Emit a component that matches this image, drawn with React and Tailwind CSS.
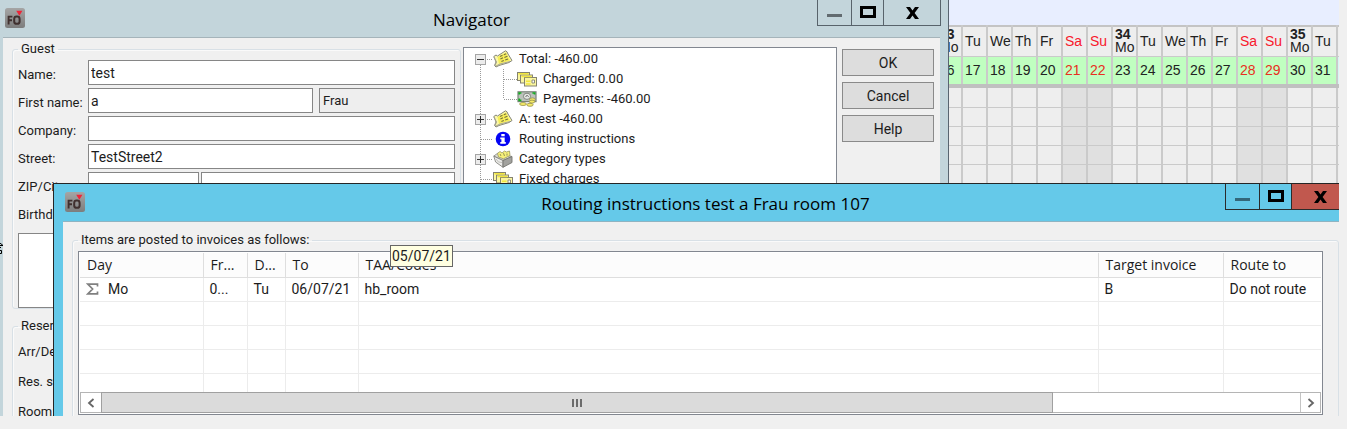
import React from "react";

const ui = "font-[Roboto,'Liberation_Sans',sans-serif] text-[13px] leading-[18px] text-[#1c1c1c]";

function AppIcon() {
  return (
    <svg width="20" height="20" viewBox="0 0 20 20" aria-hidden="true" className="shrink-0">
      <defs>
        <linearGradient id="badge" x1="0" y1="0" x2="0" y2="1">
          <stop offset="0" stopColor="#a5a5a5" />
          <stop offset="1" stopColor="#7d7d7d" />
        </linearGradient>
      </defs>
      <rect width="20" height="20" rx="2.5" fill="url(#badge)" />
      <path d="M3.6 16.5V8.6H7.4M3.6 12.3H7" fill="none" stroke="#40302f" strokeWidth="1.9" />
      <rect x="9.2" y="8.6" width="5.4" height="7.2" rx="2.4" fill="none" stroke="#40302f" strokeWidth="2" />
      <path d="M11.2 2.8H17.4L14.4 7.8Z" fill="#ee2438" />
    </svg>
  );
}

function Note() {
  return (
    <svg width="20" height="18" viewBox="0 0 20 18" aria-hidden="true">
      <path d="M0.8 6.5L3 5L4.5 6L12.5 0.8L14 1.8L15 4L19 10.5L16 12.5L6 15.5L3 17L1.5 15.5L3 12Z" fill="#fbf8a8" stroke="#85857a" strokeWidth="1" />
      <path d="M4.5 7L13 2.5L17 10.5L6 14Z" fill="#f6ee58" />
      <path d="M1 7L3.5 12L2 16M3 16L7 14L17 11.5" fill="none" stroke="#a8a690" strokeWidth="1" />
      <path d="M7 6.4L9.5 5.2M10.8 4.8L13.2 3.8M7.4 9L10 7.8M11.4 7.4L14.4 6.2M8.4 11.4L10.8 10.4M12.2 10L15 9" fill="none" stroke="#77713c" strokeWidth="1.1" />
    </svg>
  );
}

function Cards() {
  return (
    <svg width="20" height="15" viewBox="0 0 20 15" aria-hidden="true">
      <g fill="#faf6a0" stroke="#85836f" strokeWidth="1">
        <rect x="0.5" y="0.5" width="12" height="8" />
        <rect x="3.5" y="3" width="12" height="8" />
        <rect x="7.5" y="5.5" width="12" height="8.5" />
      </g>
      <path d="M1.5 1.8H11.5M4.5 4.4H14.5M9 9.2H13.5M9 12H13.5" stroke="#f2e63e" strokeWidth="1.5" />
      <path d="M15 8h2.5v3H15z" fill="#fff" stroke="#85836f" strokeWidth="0.9" />
    </svg>
  );
}

function Cash() {
  return (
    <svg width="20" height="16" viewBox="0 0 20 16" aria-hidden="true">
      <rect x="1" y="0.8" width="18" height="9.8" fill="#bcc2bb" stroke="#7b827a" strokeWidth="1.2" />
      <path d="M2.2 3.6V2H4.4M15.4 2H17.6V3.6M2.2 7.6V9.4H4.4" fill="none" stroke="#12ac20" strokeWidth="1.7" />
      <ellipse cx="10" cy="5.3" rx="3.6" ry="3.1" fill="#e4e7e3" stroke="#82877f" />
      <path d="M8.6 6L10 4.2L11.6 5.8" fill="none" stroke="#666" strokeWidth="1" />
      <g fill="#f6ec66" stroke="#96904c" strokeWidth="0.8">
        <ellipse cx="15.4" cy="8.4" rx="2.8" ry="1.5" />
        <ellipse cx="15" cy="10.6" rx="2.8" ry="1.5" />
        <ellipse cx="6" cy="13" rx="3.4" ry="1.5" />
        <ellipse cx="13" cy="13.8" rx="3.2" ry="1.5" />
      </g>
    </svg>
  );
}

function Info() {
  return (
    <svg width="20" height="16" viewBox="0 0 20 16" aria-hidden="true">
      <circle cx="10" cy="8" r="7.3" fill="#0404f4" />
      <path d="M8.3 3H11.7V5.3H8.3ZM7.3 6.5H11.7V11H12.8V12.8H7.3V11H8.4V8.2H7.3Z" fill="#fff" />
    </svg>
  );
}

function Box() {
  return (
    <svg width="20" height="18" viewBox="0 0 20 18" aria-hidden="true">
      <path d="M0.8 6L5 3L19 6.5L10 10.5Z" fill="#dcdcd6" stroke="#85857f" strokeWidth="0.8" />
      <path d="M5.5 7L4.5 3.5L7 1.5L9 3L11.5 1L13.5 2L16.5 1L17 5.5L10.5 8.8Z" fill="#f6f07a" stroke="#99965f" strokeWidth="0.8" />
      <path d="M7 4L8 6M10.5 3.2L11.5 6M14 3.5L14 5.6" stroke="#8b874e" strokeWidth="0.9" />
      <path d="M0.8 6.2L10 10.5V17.3L2.6 12Z" fill="#ececea" stroke="#85857f" strokeWidth="0.9" />
      <path d="M10 10.5L19 6.5V12.5L10 17.3Z" fill="#a2a29e" stroke="#75756f" strokeWidth="0.9" />
      <path d="M3 9L5.5 12L9 12.5" fill="none" stroke="#b5b5af" strokeWidth="0.8" />
    </svg>
  );
}

function WindowButtons({ line, dash, close }) {
  return (
    <div className={`-mr-px flex h-[26px] border border-t-0 ${line}`}>
      <button aria-label="Minimize" className={`flex w-[34px] items-center justify-center border-r pt-1.5 ${line}`}>
        <svg width="15" height="3" viewBox="0 0 15 3"><path d="M0 0H15V3H0Z" fill={dash} /></svg>
      </button>
      <button aria-label="Maximize" className={`flex w-8 items-center justify-center border-r pb-px ${line}`}>
        <svg width="16" height="12" viewBox="0 0 16 12"><path d="M1.5 1.5H14.5V10.5H1.5Z" fill="none" stroke="#000" strokeWidth="3" /></svg>
      </button>
      <button aria-label="Close" className={`flex w-[56px] items-center justify-center ${close}`}>
        <svg width="13" height="12" viewBox="0 0 13 12">
          <path d="M0 0H4L6.5 3.6L9 0H13L8.6 6L13 12H9L6.5 8.4L4 12H0L4.4 6Z" fill="#000" />
        </svg>
      </button>
    </div>
  );
}

const days = [
  ["Mo", 16, "33"], ["Tu", 17], ["We", 18], ["Th", 19], ["Fr", 20], ["Sa", 21], ["Su", 22],
  ["Mo", 23, "34"], ["Tu", 24], ["We", 25], ["Th", 26], ["Fr", 27], ["Sa", 28], ["Su", 29],
  ["Mo", 30, "35"], ["Tu", 31],
];
const weekend = (d) => d === "Sa" || d === "Su";

function Calendar() {
  return (
    <section aria-label="Room calendar" className="flex flex-col items-end bg-[#eeeeee]">
      <div className="h-[25px] w-full bg-[#e8eeff]" />
      <table className="table-fixed border-collapse border-t-2 border-[#c4c4c4] font-['Liberation_Sans',Arial,sans-serif] text-[14px] leading-[14px] text-[#222]">
        <thead>
          <tr className="h-[30px]">
            {days.map(([d, n, week]) => (
              <th key={n} className={`w-[25px] min-w-[25px] border-r-2 border-b border-[#cacaca] p-0 pl-[2px] text-left font-normal ${weekend(d) ? "text-[#f8182c]" : ""}`}>
                {week && <span className="block leading-[13px] font-bold">{week}</span>}
                <span className={week ? "block leading-[13px]" : ""}>{d}</span>
              </th>
            ))}
            <th className="w-[2px] min-w-[2px] border-b border-[#cacaca] p-0" />
          </tr>
          <tr className="h-[28px] bg-[#c0ffc0]">
            {days.map(([d, n]) => (
              <th key={n} className={`border-r-2 border-r-[#cacaca] p-0 pl-[2px] text-left font-normal ${weekend(d) ? "text-[#e83020]" : ""}`}>{n}</th>
            ))}
            <th className="bg-[#d8f4f4] p-0" />
          </tr>
          <tr className="h-1 bg-[#c0c0c0]">
            <th colSpan={17} className="p-0" />
          </tr>
        </thead>
        <tbody>
          {[0, 1, 2, 3, 4, 5].map((r) => (
            <tr key={r} className="h-[19px]">
              {days.map(([d, n]) => (
                <td key={n} className={`border-r-2 border-b border-[#cacaca] p-0 ${weekend(d) ? "bg-[#e0e0e0]" : ""}`} />
              ))}
              <td className="border-b border-[#cacaca] p-0" />
            </tr>
          ))}
        </tbody>
      </table>
    </section>
  );
}

const box = "h-[25px] min-w-0 border border-[#868686] bg-white px-[2px] text-[14px] outline-none";

function Field({ label, id, children }) {
  return (
    <div className="flex h-[25px]">
      <label htmlFor={id} className="w-[70px] shrink-0 pt-[6px] whitespace-nowrap">{label}</label>
      <div className="flex min-w-0 grow">{children}</div>
    </div>
  );
}

function Group({ title, className, children }) {
  return (
    <fieldset className={`min-w-0 rounded-[3px] border border-[#d8e0e6] shadow-[inset_1px_1px_0_#fafafa] ${className}`}>
      <legend className="px-[3px]">{title}</legend>
      {children}
    </fieldset>
  );
}

function Expander({ open }) {
  return (
    <button aria-label={open ? "Collapse" : "Expand"} className="relative flex size-[11px] items-center justify-center border border-[#a5a5a5] bg-[#ececec]">
      <svg width="7" height="7" viewBox="0 0 7 7">
        <path d={open ? "M0 3.5H7" : "M0 3.5H7M3.5 0V7"} stroke="#333" strokeWidth="1" />
      </svg>
    </button>
  );
}

const tree = [
  { text: "Total: -460.00", icon: <Note />, toggle: "open" },
  { text: "Charged: 0.00", icon: <Cards />, child: true },
  { text: "Payments: -460.00", icon: <Cash />, child: true, last: true },
  { text: "A: test -460.00", icon: <Note />, toggle: "closed" },
  { text: "Routing instructions", icon: <Info /> },
  { text: "Category types", icon: <Box />, toggle: "closed" },
  { text: "Fixed charges", icon: <Cards /> },
];

function Tree() {
  return (
    <ul className="min-w-0 grow border border-[#828790] bg-white pt-px pl-[9px]">
      {tree.map((n, i) => (
        <li key={n.text} className="flex h-5 items-center">
          <span className="flex h-5 w-5 items-center">
            <svg width="20" height="20" viewBox="0 0 20 20" className="absolute" aria-hidden="true">
              <path d={`M7.5 ${i === 0 ? 10 : 0}V20${n.child ? "" : "M8 10.5H20"}`} stroke="#9a9a9a" strokeDasharray="1 1" fill="none" />
            </svg>
            {n.toggle && <span className="relative flex pl-[2px]"><Expander open={n.toggle === "open"} /></span>}
          </span>
          {n.child && (
            <svg width="24" height="20" viewBox="0 0 24 20" aria-hidden="true">
              <path d={`M10.5 0V${n.last ? 10 : 20}M11 10.5H24`} stroke="#9a9a9a" strokeDasharray="1 1" fill="none" />
            </svg>
          )}
          <span className="flex w-5 justify-center">{n.icon}</span>
          <span className="pl-[6px] whitespace-nowrap">{n.text}</span>
        </li>
      ))}
    </ul>
  );
}

function Navigator() {
  return (
    <section aria-label="Navigator" className={`absolute top-0 right-[390px] bottom-0 left-0 flex flex-col border-r border-[#5a6570] bg-[#c3d5db] pr-2 pl-[3px] ${ui}`}>
      <header className="grid h-[37px] shrink-0 grid-cols-[1fr_auto_1fr]">
        <div className="pt-2 pl-[2px]"><AppIcon /></div>
        <h1 className="pt-2 font-['Open_Sans','Noto_Sans',sans-serif] text-[17px] leading-6 text-black">Navigator</h1>
        <div className="flex justify-end"><WindowButtons line="border-[#58636b]" dash="#626b70" close="" /></div>
      </header>
      <div className="flex min-h-0 grow border-t border-[#a5b4ba] bg-[#f0f0f0] pt-[2px] pr-[6px] pl-[9px]">
        <div className="flex w-[449px] shrink-0 flex-col gap-2">
          <Group title="Guest" className="h-[273px] pr-[5px] pl-[5px]">
            <div className="flex flex-col gap-[3px] pt-[2px]">
              <Field label="Name:" id="name"><input id="name" defaultValue="test" className={`grow ${box}`} /></Field>
              <Field label="First name:" id="first">
                <input id="first" defaultValue="a" className={`mr-[6px] grow ${box}`} />
                <input aria-label="Title" defaultValue="Frau" className="h-[25px] w-[136px] border border-[#868686] bg-[#eeeeee] px-[3px] outline-none" />
              </Field>
              <Field label="Company:" id="company"><input id="company" className={`grow ${box}`} /></Field>
              <Field label="Street:" id="street"><input id="street" defaultValue="TestStreet2" className={`grow ${box}`} /></Field>
              <Field label="ZIP/City:" id="zip">
                <input id="zip" className={`mr-[2px] w-[111px] ${box}`} />
                <input aria-label="City" className={`grow ${box}`} />
              </Field>
              <Field label="Birthdate:" id="birth"><input id="birth" className={`grow ${box}`} /></Field>
              <textarea aria-label="Notes" className="mt-[5px] h-[75px] resize-none border border-[#868686] bg-white" />
            </div>
          </Group>
          <Group title="Reservation" className="h-[160px] pl-[5px]">
            <div className="flex flex-col gap-[5px] pt-[2px]">
              <Field label="Arr/Dep.:" id="arr"><input id="arr" className={`grow ${box}`} /></Field>
              <Field label="Res. status:" id="res"><input id="res" className={`grow ${box}`} /></Field>
              <Field label="Room:" id="room"><input id="room" className={`grow ${box}`} /></Field>
            </div>
          </Group>
        </div>
        <div className="ml-[2px] flex min-w-0 grow gap-[5px] pt-[7px]">
          <Tree />
          <div className="flex w-[92px] shrink-0 flex-col gap-[6px] pt-[2px]">
            {["OK", "Cancel", "Help"].map((t) => (
              <button key={t} className="h-[27px] border border-[#8a8a8a] bg-[#dddddd] text-[14px]">{t}</button>
            ))}
          </div>
        </div>
      </div>
    </section>
  );
}

const columns = [
  ["Day", "w-[123px]"], ["Fr...", "w-[44px]"], ["D...", "w-[38px]"], ["To", "w-[73px]"],
  ["TAA/Codes", ""], ["Target invoice", "w-[125px]"], ["Route to", "w-[98px]"],
];
const row = ["Mo", "0...", "Tu", "06/07/21", "hb_room", "B", "Do not route"];

function Chevron({ d }) {
  return <svg width="8" height="10" viewBox="0 0 8 10"><path d={d} fill="none" stroke="#666" strokeWidth="1.8" /></svg>;
}

function Routing() {
  return (
    <section aria-label="Routing instructions" className={`absolute top-[183px] -right-[18px] left-[53px] flex flex-col border border-[#252525] bg-[#65c9e9] pr-2 pl-[9px] ${ui}`}>
      <header className="grid h-[37px] shrink-0 grid-cols-[1fr_auto_1fr]">
        <div className="pt-2 pl-[2px]"><AppIcon /></div>
        <h2 className="pt-2 font-['Open_Sans','Noto_Sans',sans-serif] text-[17px] leading-6 whitespace-nowrap text-black">Routing instructions test a Frau room 107</h2>
        <div className="flex justify-end"><WindowButtons line="border-[#2b2b2b]" dash="#33677a" close="bg-[#c1584e]" /></div>
      </header>
      <div className="border-t border-[#8fb4c2] bg-[#f0f0f0] px-[9px] pt-[9px] pb-5">
        <Group title="Items are posted to invoices as follows:" className="pr-[15px] pb-5 pl-[5px]">
          <div className="mt-[2px] border border-[#828790] bg-white p-[1px]">
            <table className="w-full table-fixed border-collapse text-left text-[14px]">
              <thead>
                <tr className="h-6 font-['Open_Sans','Noto_Sans',sans-serif]">
                  {columns.map(([t, w]) => (
                    <th key={t} className={`${w} border-r border-b border-[#dedede] bg-[#fcfcfc] p-0 pl-[7px] font-normal last:border-r-0`}>{t}</th>
                  ))}
                </tr>
              </thead>
              <tbody>
                <tr className="h-6">
                  {row.map((t, i) => (
                    <td key={t} className="border-r border-b border-[#ececec] p-0 pl-[6px] whitespace-nowrap last:border-r-0">
                      {i === 0 ? (
                        <span className="flex items-center gap-[9px]">
                          <svg width="13" height="13" viewBox="0 0 13 13" aria-hidden="true">
                            <path d="M11.5 3.5V1.2H1.8L6.6 6L1.8 10.8H11.5V8.5" fill="none" stroke="#808080" strokeWidth="1.7" />
                          </svg>
                          {t}
                        </span>
                      ) : t}
                    </td>
                  ))}
                </tr>
                {[0, 1, 2].map((r) => (
                  <tr key={r} className="h-6">
                    {row.map((t) => <td key={t} className="border-r border-b border-[#ececec] p-0 last:border-r-0" />)}
                  </tr>
                ))}
                <tr className="h-[19px]">
                  {row.map((t) => <td key={t} className="border-r border-[#ececec] p-0 last:border-r-0" />)}
                </tr>
              </tbody>
            </table>
            <div className="flex h-[21px] border border-[#b5b5b5]">
              <button aria-label="Scroll left" className="flex w-5 items-center justify-center"><Chevron d="M6.5 1L2 5L6.5 9" /></button>
              <div className="flex grow">
                <div className="-my-px flex w-[79.4%] items-center justify-center border border-[#a0a0a0] bg-[#dbdbdb]">
                  <svg width="11" height="8" viewBox="0 0 11 8"><path d="M0 0H2V8H0ZM4 0H6V8H4ZM8 0H10V8H8Z" fill="#6c6c6c" /></svg>
                </div>
              </div>
              <button aria-label="Scroll right" className="flex w-5 items-center justify-center border-l border-[#c4c4c4]"><Chevron d="M1.5 1L6 5L1.5 9" /></button>
            </div>
          </div>
        </Group>
      </div>
    </section>
  );
}

export default function App() {
  return (
    <main className="h-screen bg-[#f0f0f0] pr-2 pb-[13px]">
      <div className="relative h-full overflow-hidden">
        <Calendar />
        <Navigator />
        <Routing />
        <div role="tooltip" className="absolute top-[245px] left-[390px] border border-[#666] bg-[#ffffe1] px-px py-px font-[Roboto,'Liberation_Sans',sans-serif] text-[14px] leading-[18px] whitespace-nowrap text-[#1c1c1c]">05/07/21</div>
        <svg width="4" height="12" viewBox="0 0 4 12" className="absolute top-[243px] left-0" aria-hidden="true">
          <path d="M0 0L3 2.5H0M0 7.5H1.5V10.5H0M0 4.5H1" fill="none" stroke="#000" strokeWidth="1" />
        </svg>
      </div>
    </main>
  );
}
